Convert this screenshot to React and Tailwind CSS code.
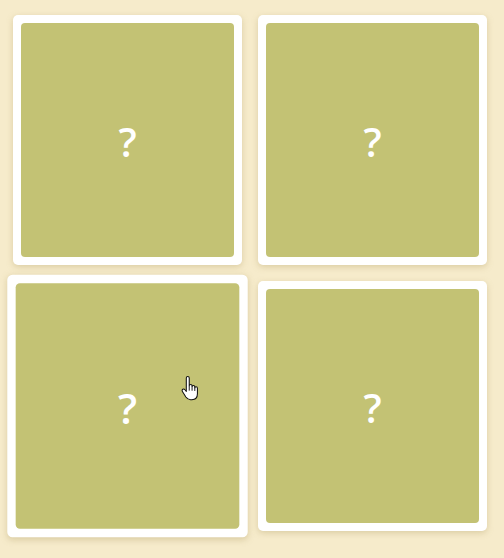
const cards = [0, 1, 2, 3];

const HandCursor = () => (
  <svg
    className="absolute left-[180px] top-[375px] pointer-events-none"
    width="21"
    height="26"
    viewBox="0 0 20 24"
    aria-hidden="true"
  >
    <path
      d="M6 2.5c0-.9.6-1.5 1.4-1.5s1.4.6 1.4 1.5v7.3c.2-.8.8-1.2 1.4-1.2.8 0 1.3.6 1.3 1.4v.6c.2-.7.7-1 1.3-1 .8 0 1.3.6 1.3 1.4v.8c.2-.6.7-.9 1.2-.9.8 0 1.3.6 1.3 1.4v5.2c0 3.3-2.1 5.6-5.3 5.6H10c-2 0-3.3-.9-4.4-2.5L2.3 15.3c-.5-.8-.3-1.7.4-2.1.7-.4 1.5-.2 2 .5L6 15.3V2.5z"
      fill="#fff"
      stroke="#111"
      strokeWidth="1"
      strokeLinejoin="round"
    />
    <path d="M8.8 10v4.5M11.5 10.6v4M14.1 11.6v3.2" stroke="#111" strokeWidth="0.9" />
  </svg>
);

const Card = ({ hovered }) => (
  <button
    type="button"
    className={`w-[229px] h-[250px] bg-white rounded-[5px] p-2 shadow-[0_2px_6px_rgba(170,150,90,0.35)] transition-transform ${
      hovered ? "scale-105" : ""
    }`}
  >
    <div className="w-full h-full bg-[#c3c274] rounded-[4px] flex items-center justify-center">
      <span className="text-white text-[40px] font-semibold leading-none translate-y-[2px] font-['Open_Sans',sans-serif]">
        ?
      </span>
    </div>
  </button>
);

export default function App() {
  return (
    <div className="relative min-h-[558px] w-full bg-[#f6ebcb] pl-[13px] pt-[15px]">
      <div className="grid grid-cols-[229px_229px] gap-4">
        {cards.map((i) => (
          <Card key={i} hovered={i === 2} />
        ))}
      </div>
      <HandCursor />
    </div>
  );
}
